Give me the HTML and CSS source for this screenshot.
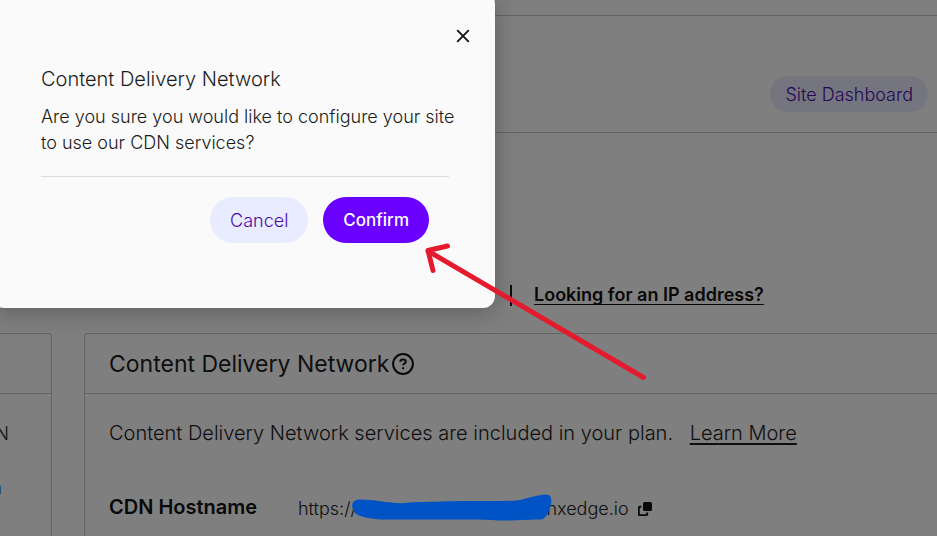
FILE: index.html
```html
<!DOCTYPE html>
<html lang="en">
<head>
<meta charset="utf-8">
<meta name="viewport" content="width=device-width, initial-scale=1">
<title>Content Delivery Network</title>
<link rel="stylesheet" href="styles.css">
</head>
<body>
<div class="page">
  <div class="topbar"></div>
  <header class="site-header">
    <button class="btn btn-small" type="button">Site Dashboard</button>
  </header>
  <main>
    <div class="links">
      <span class="divider"></span>
      <a class="ip-link" href="#ip">Looking for an IP address?</a>
    </div>
    <div class="cards">
      <section class="card card-side">
        <div class="card-head"></div>
        <div class="side-body">
          <p class="side-text">CDN</p>
          <a class="side-link" href="#open">Open</a>
        </div>
      </section>
      <section class="card card-main">
        <div class="card-head">
          <h2>Content Delivery Network</h2>
          <svg class="help" viewBox="0 0 22 22" aria-hidden="true">
            <circle cx="11" cy="11" r="9.9"/>
            <path d="M8.2 8.9C8.300 7.300 9.500 6.500 11 6.500c1.600 0 2.800.9 2.800 2.200 0 1.900-2.700 1.800-2.700 3.600"/>
            <path d="M11.1 14.200v2"/>
          </svg>
        </div>
        <div class="card-body">
          <p class="plan">Content Delivery Network services are included in your plan. <a href="#more">Learn More</a></p>
          <div class="host-row">
            <h3>CDN Hostname</h3>
            <div class="host"><span>https:/</span><span class="redacted">/</span><span>nxedge.io</span>
              <svg class="copy" viewBox="0 0 14 14" aria-hidden="true">
                <rect class="solid" x="5" y="0" width="9" height="9" rx="1.5"/>
                <path d="M3.4 4.7H2A1.2 1.2 0 0 0 .8 5.900V12A1.200 1.200 0 0 0 2 13.200H8A1.200 1.200 0 0 0 9.200 12V10.600"/>
              </svg>
            </div>
          </div>
        </div>
      </section>
    </div>
  </main>
</div>
<div class="overlay">
  <div class="dialog" role="dialog" aria-labelledby="dialog-title">
    <button class="close" type="button" aria-label="Close">
      <svg viewBox="0 0 14 14" aria-hidden="true"><path d="M1.200 1.200 12.800 12.800M12.800 1.200 1.200 12.800"/></svg>
    </button>
    <h1 id="dialog-title">Content Delivery Network</h1>
    <p>Are you sure you would like to configure your site to use our CDN services?</p>
    <div class="actions">
      <button class="btn" type="button">Cancel</button>
      <button class="btn btn-primary" type="button">Confirm</button>
    </div>
  </div>
</div>
<svg class="marks" width="937" height="536" viewBox="0 0 937 536" aria-hidden="true">
  <path class="arrow" d="M643.500 377.500 428 251M447.500 246 428 250.500 433 270.500"/>
  <path class="scribble" d="M352.500 508C351 502 355 499.500 361 499.500C373 499.500 388 503 402 503.200C415 501.500 432 502 448 501.200C474 500.500 498 501.500 517 500.500C528 498.500 539 494 547 494.500C551 495 552 499 551 504C549 512 546 519 541 519.500C527 519 514 521 499 520.500C484 519 465 519.500 440 519.500H380C367 518 354 517 352.500 508Z"/>
</svg>
</body>
</html>
```
FILE: styles.css
```css
* { box-sizing: border-box; }

body {
  margin: 0;
  height: 100vh;
  overflow: hidden;
  background: #fff;
  color: #1c1c1c;
  font-family: Inter, "Liberation Sans", sans-serif;
  font-size: 18px;
  font-weight: 300;
}

h1, h2, h3, p { margin: 0; }

.page {
  display: flex;
  flex-direction: column;
  height: 100%;
}

main {
  display: flex;
  flex: 1;
  flex-direction: column;
  min-height: 0;
}

.topbar {
  height: 16px;
  border-bottom: 1px solid #c8c8c8;
}

.site-header {
  display: flex;
  justify-content: flex-end;
  align-items: flex-end;
  height: 117px;
  padding: 0 9px 20px;
  border-bottom: 1px solid #c8c8c8;
}

.btn {
  height: 46px;
  padding: 0 20px;
  border: 0;
  border-radius: 23px;
  background: #e9ebff;
  color: #4b0bab;
  font: inherit;
}

.btn-small {
  height: 36px;
  padding: 0 15px;
}

.btn-primary {
  background: #6a00ff;
  color: #fff;
  font-size: 17px;
  font-weight: 500;
}

.links {
  display: flex;
  align-items: center;
  gap: 22px;
  padding: 151px 0 27px 510px;
}

.divider {
  width: 2px;
  height: 21px;
  background: #1c1c1c;
}

.ip-link {
  color: #111;
  font-weight: 600;
  line-height: 22px;
  text-decoration: underline 1px;
  text-decoration-skip-ink: none;
  text-underline-offset: 3px;
}

.cards {
  display: grid;
  flex: 1;
  grid-template-columns: 52px 1fr;
  gap: 32px;
  min-height: 0;
}

.card {
  border: 1px solid #c8c8c8;
  border-bottom: 0;
}

.card-side {
  border-left: 0;
  border-radius: 0 4px 0 0;
}

.card-main {
  border-right: 0;
  border-radius: 4px 0 0 0;
}

.card-head {
  display: flex;
  align-items: center;
  gap: 3px;
  height: 60px;
  padding-left: 24px;
  border-bottom: 1px solid #c8c8c8;
}

h2 {
  font-size: 23px;
  font-weight: 400;
}

.help {
  width: 22px;
  height: 22px;
  fill: none;
  stroke: #111;
  stroke-width: 2;
}

.side-body {
  display: flex;
  flex-direction: column;
  align-items: flex-end;
  gap: 30px;
  padding: 28px 42px 0 0;
  line-height: 24px;
}

.side-link {
  margin-right: 7px;
  color: #2f6fb5;
  text-decoration: none;
}

.card-body { padding: 26px 24px 0; }

.plan {
  font-size: 20px;
  line-height: 26px;
}

.plan a {
  margin-left: 11px;
  color: inherit;
  text-decoration: underline 2px;
  text-decoration-skip-ink: none;
  text-underline-offset: 3px;
}

.host-row {
  display: grid;
  grid-template-columns: 189px 1fr;
  align-items: center;
  margin-top: 48px;
}

h3 {
  color: #111;
  font-size: 20px;
  font-weight: 600;
  line-height: 26px;
}

.host {
  display: flex;
  align-items: center;
  padding-top: 3px;
}

.redacted { width: 196px; }

.copy {
  width: 14px;
  height: 14px;
  margin-left: 9px;
  fill: none;
  stroke: #111;
  stroke-width: 2;
}

.copy .solid {
  fill: #111;
  stroke: none;
}

.overlay {
  position: absolute;
  inset: 0;
  overflow: hidden;
  background: rgba(0, 0, 0, .5);
}

.dialog {
  position: absolute;
  top: -8px;
  left: -8px;
  width: 503px;
  padding: 72px 46px 65px 49px;
  border-radius: 12px;
  background: #fafafa;
  box-shadow: 0 4px 24px rgba(0, 0, 0, .25);
}

.close {
  position: absolute;
  top: 32px;
  right: 20px;
  display: grid;
  place-items: center;
  width: 24px;
  height: 24px;
  padding: 0;
  border: 0;
  background: none;
}

.close svg {
  width: 14px;
  height: 14px;
  stroke: #111;
  stroke-width: 1.8;
}

h1 {
  font-size: 20px;
  font-weight: 300;
  line-height: 30px;
}

.dialog p {
  margin: 10px -16px 0 0;
  line-height: 26px;
}

.actions {
  display: flex;
  justify-content: flex-end;
  gap: 15px;
  margin-top: 20px;
  padding: 20px 20px 0 0;
  border-top: 1px solid #dcdcdc;
}

.marks {
  position: absolute;
  top: 0;
  left: 0;
  pointer-events: none;
}

.arrow {
  fill: none;
  stroke: #e41b2f;
  stroke-width: 5;
  stroke-linecap: round;
  stroke-linejoin: round;
}

.scribble { fill: #0053c4; }
```
